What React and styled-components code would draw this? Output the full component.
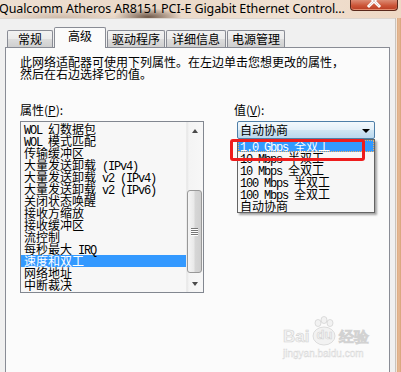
import React from 'react';
import styled, { createGlobalStyle } from 'styled-components';

const GlobalStyle = createGlobalStyle`
  html, body {
    margin: 0;
    padding: 0;
    background: #f0f0f0;
  }
  body {
    font-family: "Noto Sans CJK SC", sans-serif;
  }
`;

const Window = styled.div`
  width: 401px;
  height: 372px;
  overflow: hidden;
  display: flex;
  flex-direction: column;
  background: #ecd9c6;
`;

const TitleBar = styled.div`
  height: 18px;
  flex: none;
  display: flex;
  justify-content: space-between;
  align-items: flex-start;
  background:
    radial-gradient(ellipse 34px 9px at 148px 17px, rgba(70, 45, 30, 0.75), rgba(70, 45, 30, 0)),
    radial-gradient(ellipse 60px 8px at 60px 18px, rgba(150, 120, 100, 0.35), rgba(150, 120, 100, 0)),
    linear-gradient(to right, #eddfd2, #ead8c7 40%, #efe0d2 70%, #eed8c4);
`;

const Title = styled.div`
  font-family: "Noto Sans", sans-serif;
  font-size: 12.5px;
  line-height: 18px;
  color: #000;
  white-space: nowrap;
  margin-left: -1px;
  letter-spacing: -0.1px;
`;

const CloseButton = styled.div`
  width: 46px;
  height: 10px;
  margin-right: 3px;
  border: 1px solid #5a281b;
  border-top: none;
  border-radius: 0 0 4px 4px;
  background: linear-gradient(#dc8c74, #cc5639 55%, #b73c22);
  box-shadow: inset 0 -1px 0 rgba(255, 190, 160, 0.6);
  display: flex;
  justify-content: center;
  align-items: flex-start;
  overflow: hidden;
`;

const Body = styled.div`
  flex: 1;
  display: flex;
  min-height: 0;
`;

const Client = styled.div`
  flex: 1;
  min-width: 0;
  display: flex;
  flex-direction: column;
  background: #f0f0f0;
  border-top: 1px solid #dcd6d0;
`;

const SideFrame = styled.div`
  width: 6px;
  flex: none;
  background: linear-gradient(to right, #c9c3bd 0, #c9c3bd 1px, #f3e6da 1px, #f3e6da 2px, #dcaa82 2px, #e6bb96 4px, #d8a27b 6px);
`;

const TabStrip = styled.div`
  height: 20px;
  margin-top: 8px;
  padding-left: 7px;
  display: flex;
  align-items: flex-end;
  position: relative;
  z-index: 2;
`;

const Tab = styled.div`
  box-sizing: border-box;
  width: ${(p) => p.$w}px;
  height: ${(p) => (p.$active ? 21 : 17)}px;
  margin-bottom: ${(p) => (p.$active ? -1 : 0)}px;
  margin-right: ${(p) => (p.$gap ? 1 : 0)}px;
  border: 1px solid #898c95;
  border-bottom: none;
  border-radius: 2px 2px 0 0;
  background: ${(p) => (p.$active ? '#fbfbfb' : 'linear-gradient(#f2f2f2, #ebebeb 50%, #dddddd 51%, #cfcfcf)')};
  font-size: 12px;
  line-height: ${(p) => (p.$active ? 16 : 15)}px;
  color: #000;
  text-align: center;
`;

const TabPanel = styled.div`
  position: relative;
  flex: none;
  height: 360px;
  margin: 0 5px;
  border: 1px solid #898c95;
  background: #fbfbfb;
  padding: 8px 14px 0;
`;

const Description = styled.p`
  margin: 0 0 24px;
  font-size: 12px;
  line-height: 12px;
  color: #000;
  white-space: nowrap;
`;

const Columns = styled.div`
  display: flex;
  align-items: flex-start;
`;

const Column = styled.div`
  display: flex;
  flex-direction: column;
  width: ${(p) => p.$w}px;
  margin-left: ${(p) => p.$ml || 0}px;
`;

const Label = styled.div`
  font-size: 12px;
  line-height: 12px;
  height: 12px;
  margin-bottom: 5px;
  color: #000;
  white-space: nowrap;

  u {
    text-decoration: underline;
  }
`;

const ListBox = styled.div`
  box-sizing: border-box;
  height: 172px;
  border: 1px solid #828790;
  background: #f7f7f7;
  display: flex;
`;

const Items = styled.div`
  flex: 1;
  padding-top: 1px;
`;

const Item = styled.div`
  height: 12px;
  font-size: 12px;
  line-height: 12px;
  padding-left: ${(p) => p.$pl || 3}px;
  white-space: nowrap;
  color: ${(p) => (p.$selected ? '#fff' : '#000')};
  background: ${(p) => (p.$selected ? '#3399ff' : 'transparent')};
  outline: ${(p) => (p.$focus ? '1px dotted #f0b060' : 'none')};
  outline-offset: -1px;
`;

const Latin = styled.span`
  font-family: "Liberation Mono", monospace;
  font-size: 12px;
  letter-spacing: -1.2px;
  white-space: pre;
`;

const ScrollBar = styled.div`
  width: 17px;
  flex: none;
  display: flex;
  flex-direction: column;
  background: linear-gradient(to right, #e6e6e6, #f4f4f4 2px, #f7f7f7);
  border-left: 1px solid #ebebeb;
  box-sizing: border-box;
`;

const ArrowButton = styled.div`
  height: 17px;
  display: flex;
  align-items: center;
  justify-content: center;
`;

const Arrow = styled.div`
  width: 0;
  height: 0;
  border-left: 3.5px solid transparent;
  border-right: 3.5px solid transparent;
  ${(p) => (p.$up ? 'border-bottom: 4px solid #4a4a4a;' : 'border-top: 4px solid #4a4a4a;')}
`;

const Track = styled.div`
  flex: 1;
  padding-top: 51px;
`;

const Thumb = styled.div`
  box-sizing: border-box;
  height: 83px;
  margin: 0 1px 0 0;
  border: 1px solid #989898;
  border-radius: 3px;
  background: linear-gradient(to right, #f5f5f5, #e9e9e9 45%, #d6d6d6 55%, #cfcfcf);
  display: flex;
  flex-direction: column;
  align-items: center;
  justify-content: center;
  gap: 1px;
`;

const Grip = styled.div`
  width: 7px;
  height: 1px;
  background: #777;
  box-shadow: 0 1px 0 #fff;
`;

const ComboWrap = styled.div`
  position: relative;
  width: 138px;
  margin-left: 3px;
`;

const Combo = styled.div`
  box-sizing: border-box;
  height: 18px;
  border: 1px solid #4f7fa8;
  border-radius: 2px;
  background: linear-gradient(#f3f9fd, #e3eff8 50%, #d0e5f3 51%, #bad8ee);
  display: flex;
  align-items: center;
  justify-content: space-between;
  padding: 0 4px 0 2px;
  font-size: 12px;
  line-height: 16px;
  color: #000;
`;

const ComboArrow = styled.div`
  width: 0;
  height: 0;
  border-left: 4px solid transparent;
  border-right: 4px solid transparent;
  border-top: 4px solid #000;
  margin-top: 1px;
`;

const DropList = styled.div`
  position: absolute;
  top: 18px;
  left: 0;
  width: 138px;
  box-sizing: border-box;
  border: 1px solid #646464;
  background: #f7f7f7;
  box-shadow: 2px 2px 2px rgba(0, 0, 0, 0.35);
  z-index: 3;
`;

const Annotation = styled.div`
  position: absolute;
  left: -7px;
  top: 18px;
  width: 135px;
  height: 22px;
  box-sizing: border-box;
  border: 3px solid #ee1d1d;
  border-radius: 3px;
  z-index: 4;
`;

const Watermark = styled.div`
  position: absolute;
  left: 277px;
  top: 268px;
  display: flex;
  flex-direction: column;
  align-items: flex-start;
  color: #e3e3e3;
  text-shadow: 0 0 1px #fff;
  pointer-events: none;
`;

const WmRow = styled.div`
  display: flex;
  align-items: flex-end;
  height: 30px;
`;

const WmBig = styled.span`
  position: relative;
  font-family: "Liberation Sans", sans-serif;
  font-weight: bold;
  font-size: ${(p) => p.$size || 17}px;
  line-height: 18px;
  margin-bottom: ${(p) => p.$mb || 0}px;
  -webkit-text-stroke: 0.6px #d2d2d2;
  color: #f2f2f2;
`;

const Paw = styled.div`
  position: relative;
  width: 30px;
  height: 30px;
  display: flex;
  align-items: flex-end;
  justify-content: center;
`;

const PawIcon = styled.svg`
  position: absolute;
  left: 0;
  top: 0;
`;

const WmSmall = styled.div`
  font-family: "Liberation Sans", sans-serif;
  font-size: 10px;
  line-height: 12px;
  margin-top: 2px;
  -webkit-text-stroke: 0.4px #d6d6d6;
  color: #f4f4f4;
`;

const properties = [
  'WOL 幻数据包',
  'WOL 模式匹配',
  '传输缓冲区',
  '大量发送卸载 (IPv4)',
  '大量发送卸载 v2 (IPv4)',
  '大量发送卸载 v2 (IPv6)',
  '关闭状态唤醒',
  '接收方缩放',
  '接收缓冲区',
  '流控制',
  '每秒最大 IRQ',
  '速度和双工',
  '网络地址',
  '中断裁决',
];

const speeds = [
  '1.0 Gbps 全双工',
  '10 Mbps 半双工',
  '10 Mbps 全双工',
  '100 Mbps 半双工',
  '100 Mbps 全双工',
  '自动协商',
];

const tabs = [
  { label: '常规', w: 46, gap: true },
  { label: '高级', w: 52, active: true, gap: true },
  { label: '驱动程序', w: 58, gap: true },
  { label: '详细信息', w: 60, gap: true },
  { label: '电源管理', w: 58 },
];

// latin runs get the narrow monospace look of the old bitmap font
const mixed = (text) =>
  text
    .split(/([\x20-\x7e]+)/)
    .filter(Boolean)
    .map((run, i) => (/^[\x20-\x7e]+$/.test(run) ? <Latin key={i}>{run}</Latin> : run));

const App = () => {
  return (
    <Window>
      <GlobalStyle />
      <TitleBar>
        <Title>Qualcomm Atheros AR8151 PCI-E Gigabit Ethernet Control...</Title>
        <CloseButton>
          <svg width="16" height="10" viewBox="0 0 16 10">
            <path d="M3 -4 L13 6 M13 -4 L3 6" stroke="#fff" strokeWidth="3" strokeLinecap="square" />
            <path d="M3 -4 L13 6 M13 -4 L3 6" stroke="#6b3020" strokeWidth="0.6" fill="none" opacity="0.35" />
          </svg>
        </CloseButton>
      </TitleBar>
      <Body>
        <Client>
          <TabStrip>
            {tabs.map((t) => (
              <Tab key={t.label} $w={t.w} $active={t.active} $gap={t.gap}>
                {t.label}
              </Tab>
            ))}
          </TabStrip>
          <TabPanel>
            <Description>
              此网络适配器可使用下列属性。在左边单击您想更改的属性，
              <br />
              然后在右边选择它的值。
            </Description>
            <Columns>
              <Column $w={186}>
                <Label>
                  属性(<u>P</u>):
                </Label>
                <ListBox>
                  <Items>
                    {properties.map((p) => (
                      <Item key={p} $selected={p === '速度和双工'}>
                        {mixed(p)}
                      </Item>
                    ))}
                  </Items>
                  <ScrollBar>
                    <ArrowButton>
                      <Arrow $up />
                    </ArrowButton>
                    <Track>
                      <Thumb>
                        <Grip />
                        <Grip />
                        <Grip />
                        <Grip />
                      </Thumb>
                    </Track>
                    <ArrowButton>
                      <Arrow />
                    </ArrowButton>
                  </ScrollBar>
                </ListBox>
              </Column>
              <Column $w={141} $ml={30}>
                <Label>
                  值(<u>V</u>):
                </Label>
                <ComboWrap>
                  <Combo>
                    <span>自动协商</span>
                    <ComboArrow />
                  </Combo>
                  <DropList>
                    {speeds.map((s, i) => (
                      <Item key={s} $pl={2} $selected={i === 0} $focus={i === 0}>
                        {mixed(s)}
                      </Item>
                    ))}
                  </DropList>
                  <Annotation />
                </ComboWrap>
              </Column>
            </Columns>
            <Watermark>
              <WmRow>
                <WmBig>Bai</WmBig>
                <Paw>
                  <PawIcon width="30" height="30" viewBox="0 0 30 30">
                    <g fill="#f2f2f2" stroke="#d4d4d4" strokeWidth="0.8">
                      <ellipse cx="9" cy="7" rx="3" ry="3.5" />
                      <ellipse cx="15" cy="4" rx="3" ry="3.5" />
                      <ellipse cx="21" cy="7" rx="3" ry="3.5" />
                      <ellipse cx="15" cy="20" rx="11" ry="9" />
                    </g>
                  </PawIcon>
                  <WmBig $size={13} $mb={2}>du</WmBig>
                </Paw>
                <WmBig $size={15}>经验</WmBig>
              </WmRow>
              <WmSmall>jingyan.baidu.com</WmSmall>
            </Watermark>
          </TabPanel>
        </Client>
        <SideFrame />
      </Body>
    </Window>
  );
};

export default App;
